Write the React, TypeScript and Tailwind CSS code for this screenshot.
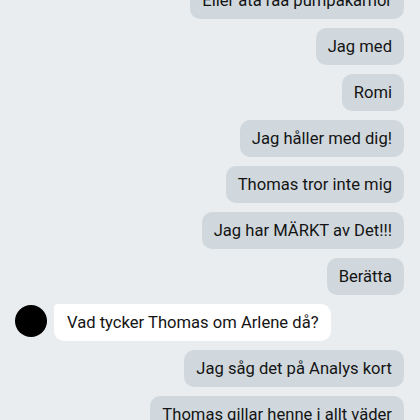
const sent = [
  "Eller äta råa pumpakärnor",
  "Jag med",
  "Romi",
  "Jag håller med dig!",
  "Thomas tror inte mig",
  "Jag har MÄRKT av Det!!!",
  "Berätta",
];

const later = ["Jag såg det på Analys kort", "Thomas gillar henne i allt väder"];

function Sent({ text }: { text: string }) {
  return (
    <div className="flex justify-end">
      <div className="rounded-[10px] bg-[#d0d8dd] px-3 py-2 text-[16.6px] leading-[21px] text-[#141414]">
        {text}
      </div>
    </div>
  );
}

export default function App() {
  return (
    <main
      className="h-[420px] w-[420px] overflow-hidden bg-[#e9edf0]"
      style={{ fontFamily: "Roboto, 'Noto Sans', sans-serif" }}
    >
      <div className="-mt-[18px] flex flex-col gap-[9px] pl-[15px] pr-4">
        {sent.map((t) => (
          <Sent key={t} text={t} />
        ))}

        <div className="flex items-start gap-[7px]">
          <div className="mt-[1px] h-[32px] w-[32px] shrink-0 rounded-full bg-black" />
          <div className="rounded-[10px] rounded-tl-[4px] bg-white py-2 pl-[13px] pr-3 text-[16.6px] leading-[21px] text-[#141414]">
            Vad tycker Thomas om Arlene då?
          </div>
        </div>

        {later.map((t) => (
          <Sent key={t} text={t} />
        ))}
      </div>
    </main>
  );
}
